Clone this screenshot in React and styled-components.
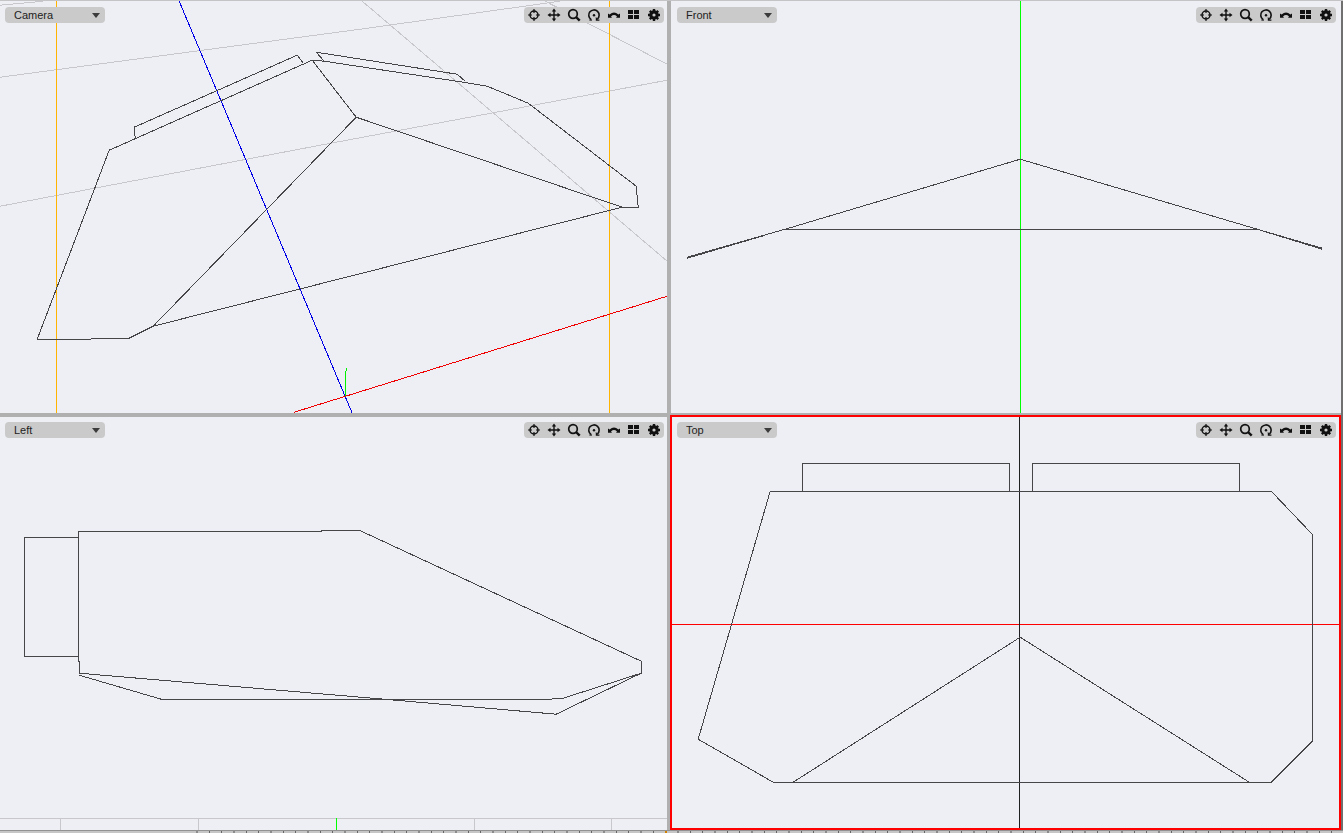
import React from 'react';
import styled, { createGlobalStyle } from 'styled-components';

const views = [
    {
        name: 'Camera',
        padding: '6px 3px 0 5px',
        viewBox: '0 1 667 412',
        lines: [
            { color: '#c8c8cc', d: 'M0 5L43 1M0 77L360 29L560 1M0 206L320 145L667 80M362 1L667 261M545 1L667 64' },
            { color: '#ffb400', d: 'M56 1V413M609 1V413' },
            { color: '#0000e6', d: 'M179 1L352 413' },
            { color: '#f00000', d: 'M294 412L667 296' },
            { color: '#00f000', d: 'M345 396V371M346 371V368' },
            { color: '#464648', d: 'M37 339L109 150L303 64L312 60L324 61L463 82L487 86L528 103L636 186L638 207H622L153 326L129 338L82 339ZM312 60L356 117L622 207M356 117L153 326M135 138L134 127L297 55L303 63M324 61L316 52L457 74L465 81' },
        ],
    },
    {
        name: 'Front',
        padding: '6px 5px 0 6px',
        viewBox: '671 1 670 412',
        lines: [
            { color: '#00ff00', d: 'M1020 1V413' },
            { color: '#464648', d: 'M687 257L785 229L1020 159L1257 229L1322 249M687 258L765 235M785 229H1257L1322 248' },
        ],
    },
    {
        name: 'Left',
        padding: '5px 3px 0 5px',
        viewBox: '0 417 667 413',
        lines: [
            { color: '#c8c8cc', d: 'M0 818H667M60 818V830M198 818V830M474 818V830M611 818V830' },
            { color: '#00ff00', d: 'M336 818V830' },
            { color: '#464648', d: 'M78 537H24V656H78M78 662V531H321L323 530H359L641 661V673L556 714L372 698L79 673V661M79 675L161 699H549L563 698L641 673' },
        ],
    },
    {
        name: 'Top',
        active: true,
        padding: '5px 3px 0 5px',
        viewBox: '672 417 667 411',
        lines: [
            { color: '#ff0000', d: 'M671 624H1339' },
            { color: '#202022', d: 'M1019 416V828' },
            { color: '#464648', d: 'M770 491H1271L1312 534V741L1271 782H773L698 739ZM802 491V463H1009V491M1032 491V463H1239V491M793 782L1020 637L1249 782' },
        ],
    },
];

const tools = [
    {
        label: 'Center view',
        icon: (
            <>
                <circle cx="6" cy="6" r="4" fill="none" stroke="#111" strokeWidth="1.5" />
                <path d="M6 0V4M6 8V12M0 6H4M8 6H12" stroke="#111" strokeWidth="1.2" />
            </>
        ),
    },
    {
        label: 'Pan',
        icon: (
            <>
                <path d="M6 1V11M1 6H11" stroke="#111" strokeWidth="1.4" />
                <path d="M6 -.5L8.2 2.5H3.8ZM6 12.5L3.8 9.5H8.2ZM-.5 6L2.5 3.8V8.2ZM12.5 6L9.5 8.2V3.8Z" />
            </>
        ),
    },
    {
        label: 'Zoom',
        icon: (
            <>
                <circle cx="5" cy="5" r="4.3" fill="none" stroke="#111" strokeWidth="1.7" />
                <path d="M8 8L11.7 11.7" stroke="#111" strokeWidth="2.4" />
            </>
        ),
    },
    {
        label: 'Rotate',
        icon: (
            <>
                <path d="M3 10.4A5.2 5.2 0 1 1 9.4 10" fill="none" stroke="#111" strokeWidth="1.6" />
                <path d="M1.4 10.4H4V11.6H1.4Z" />
                <path d="M7.8 7.8V11.8H11.4V10.6H9.8Z" />
                <circle cx="6" cy="6.2" r="1.2" />
            </>
        ),
    },
    {
        label: 'Bank',
        icon: <path d="M0 4.6L1.6 5.4Q6 1.6 10.4 5.4L12 4.6V8.8H8L9 7.4Q6 4.8 3 7.4L4 8.8H0Z" />,
    },
    {
        label: 'Layout',
        icon: <path d="M0 1H5V5H0ZM6 1H11V5H6ZM0 6H5V10H0ZM6 6H11V10H6Z" />,
    },
    {
        label: 'View settings',
        icon: (
            <>
                <path d="M6 0V12M0 6H12M1.8 1.8L10.2 10.2M10.2 1.8L1.8 10.2" stroke="#111" strokeWidth="2.4" />
                <circle cx="6" cy="6" r="3.2" fill="none" stroke="#111" strokeWidth="3" />
                <circle cx="6" cy="6" r="1.6" fill="#cacaca" />
            </>
        ),
    },
];

const Viewport = ({ view }) => (
    <Pane $active={view.active}>
        <Wireframe viewBox={view.viewBox} preserveAspectRatio="none" aria-hidden="true">
            {view.lines.map(line => (
                <path key={line.d} d={line.d} stroke={line.color} transform="translate(.2 .2)" />
            ))}
        </Wireframe>
        <Header $padding={view.padding}>
            <SelectBox>
                <ViewSelect aria-label="View" defaultValue={view.name}>
                    {views.map(v => <option key={v.name}>{v.name}</option>)}
                </ViewSelect>
                <Arrow viewBox="0 0 8 5"><path d="M0 0H8L4 5Z" /></Arrow>
            </SelectBox>
            <Toolbar>
                {tools.map(tool => (
                    <ToolButton key={tool.label} aria-label={tool.label}>
                        <ToolIcon viewBox="0 0 12 12">{tool.icon}</ToolIcon>
                    </ToolButton>
                ))}
            </Toolbar>
        </Header>
    </Pane>
)

const App = () => {
    return (
        <Page>
            <GlobalStyle />
            <Grid>
                {views.map(view => <Viewport key={view.name} view={view} />)}
            </Grid>
            <Timeline>
                <Ticks />
            </Timeline>
        </Page>
    )
}

const GlobalStyle = createGlobalStyle`
body{
margin:0;
}
`
const Page = styled.div`
display:flex;
flex-direction:column;
height:100vh;
box-sizing:border-box;
border-top:1px solid #c4c4c6;
background:#b0b0b0;
`
const Grid = styled.main`
flex:1;
min-height:0;
display:grid;
grid-template-columns:667fr 670fr;
grid-template-rows:412fr 413fr;
gap:4px;
border-right:2px solid #707070;
`
const Pane = styled.section`
position:relative;
min-width:0;
min-height:0;
background:#eeeff4;
${props => props.$active && `
margin:-2px 0 0 -1px;
border:2px solid #ff0000;
`}
`
const Wireframe = styled.svg`
position:absolute;
inset:0;
width:100%;
height:100%;
fill:none;
shape-rendering:crispEdges;
`
const Header = styled.header`
position:relative;
display:flex;
justify-content:space-between;
padding:${props => props.$padding};
`
const SelectBox = styled.div`
position:relative;
`
const ViewSelect = styled.select`
appearance:none;
display:block;
width:100px;
height:16px;
padding:0 20px 0 9px;
border:0;
border-radius:4px;
background:#cacaca;
color:#222;
font:11px/16px "Liberation Sans", Arial, sans-serif;
`
const Arrow = styled.svg`
position:absolute;
top:6px;
right:5px;
width:8px;
height:5px;
fill:#3c3c3c;
pointer-events:none;
`
const Toolbar = styled.div`
display:flex;
align-items:center;
gap:8px;
height:16px;
padding:0 4px;
border-radius:4px;
background:#cacaca;
`
const ToolButton = styled.button`
display:flex;
width:12px;
height:12px;
padding:0;
border:0;
background:none;
`
const ToolIcon = styled.svg`
width:12px;
height:12px;
overflow:visible;
fill:#111;
`
const Timeline = styled.footer`
height:3px;
box-sizing:border-box;
padding-left:196px;
border-top:1px solid #929292;
background:#c6c6c6;
`
const Ticks = styled.div`
height:2px;
background:
linear-gradient(#d08000, #d08000) 469px 0 / 2px 2px no-repeat,
repeating-linear-gradient(90deg, #8c8c8c 0 2px, transparent 2px 13px, #666 13px 14px, transparent 14px 25px, #666 25px 26px, transparent 26px 37px);
`
export default App;
